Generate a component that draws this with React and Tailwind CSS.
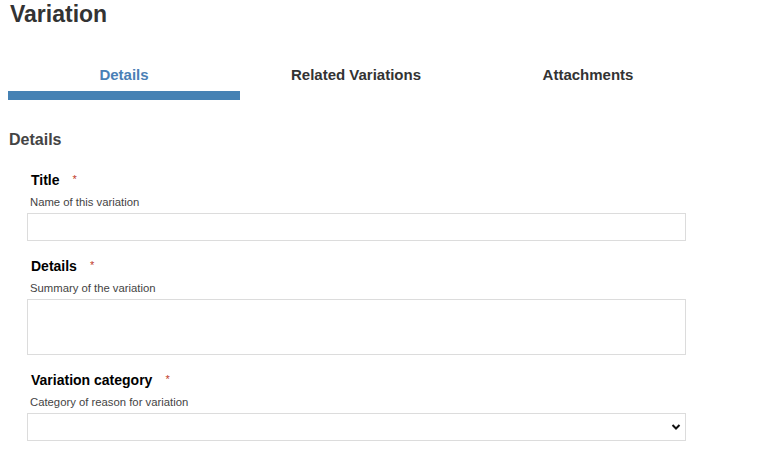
import React from 'react';

function Field({ label, help, children }) {
  return (
    <div className="mb-[15px]">
      <div className="flex items-center h-[21px] pl-[4px] text-[14px] font-bold text-black">
        <span>{label}</span>
        <span className="ml-[13px] -mt-[3px] text-[11px] font-normal text-[#c0392b]">*</span>
      </div>
      <div className="h-[22px] flex items-center pl-[3px] text-[11.3px] text-[#444]">{help}</div>
      {children}
    </div>
  );
}

export default function App() {
  return (
    <div className="w-[774px] h-[453px] overflow-hidden bg-white font-['Liberation_Sans',Arial,sans-serif]">
      <h1 className="pl-[10px] pt-[1px] h-[26px] text-[23px] leading-[26px] font-bold text-[#333]">Variation</h1>

      <div className="mt-[38px] ml-[8px] flex w-[696px]">
        <div className="flex-1 flex flex-col items-center">
          <div className="h-[27px] text-[15px] font-bold text-[#4a80b6]">Details</div>
          <div className="w-full h-[9px] bg-[#4682b4]"></div>
        </div>
        <div className="flex-1 flex flex-col items-center">
          <div className="h-[27px] text-[15px] font-bold text-[#333]">Related Variations</div>
        </div>
        <div className="flex-1 flex flex-col items-center">
          <div className="h-[27px] text-[15px] font-bold text-[#333]">Attachments</div>
        </div>
      </div>

      <h2 className="mt-[28px] pl-[9px] text-[16px] font-bold text-[#444]">Details</h2>

      <div className="mt-[18px] ml-[27px] w-[659px]">
        <Field label="Title" help="Name of this variation">
          <input className="block w-full h-[28px] border border-[#dcdcdc] outline-none" />
        </Field>
        <Field label="Details" help="Summary of the variation">
          <textarea className="block w-full h-[56px] border border-[#dcdcdc] outline-none resize-none" />
        </Field>
        <Field label="Variation category" help="Category of reason for variation">
          <div className="relative h-[28px] border border-[#dcdcdc]">
            <svg className="absolute right-[4px] top-[9px]" width="10" height="8" viewBox="0 0 10 8">
              <path d="M1.5 2 L5 5.5 L8.5 2" fill="none" stroke="#111" strokeWidth="2" />
            </svg>
          </div>
        </Field>
      </div>
    </div>
  );
}
